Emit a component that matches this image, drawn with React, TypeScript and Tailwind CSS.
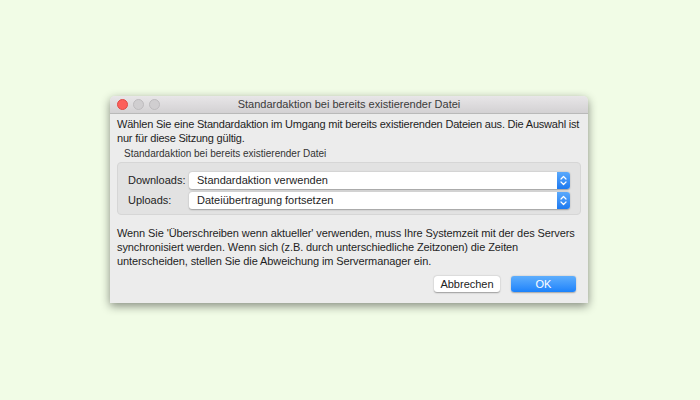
export default function App() {
  return (
    <div className="w-[700px] h-[400px] bg-[#f1fce6] flex items-start justify-start font-['Liberation_Sans',sans-serif]">
      <div className="ml-[110px] mt-[96px] w-[478px] h-[207px] bg-[#ececec] rounded-t-[5px] shadow-[0_3px_10px_rgba(0,0,0,0.45)] flex flex-col overflow-hidden">
        <div className="h-[18px] bg-gradient-to-b from-[#e8e6e8] to-[#d3d1d3] border-b border-[#b9b9b9] flex items-center relative">
          <div className="flex gap-[5px] pl-[7px]">
            <span className="w-[11px] h-[11px] rounded-full bg-[#fc605c] border border-[#de4a46]" />
            <span className="w-[11px] h-[11px] rounded-full bg-[#d0ced0] border border-[#bdbbbd]" />
            <span className="w-[11px] h-[11px] rounded-full bg-[#d0ced0] border border-[#bdbbbd]" />
          </div>
          <span className="absolute inset-0 flex items-center justify-center text-[11px] text-[#3b3b3b]">
            Standardaktion bei bereits existierender Datei
          </span>
        </div>
        <div className="pl-[7px] pr-[4px] pt-[3px] flex flex-col">
          <p className="text-[11px] tracking-[-0.2px] leading-[14px] text-[#1e1e1e]">
            Wählen Sie eine Standardaktion im Umgang mit bereits existierenden Dateien aus. Die Auswahl ist nur für diese Sitzung gültig.
          </p>
          <span className="text-[10px] leading-[12px] text-[#333] mt-[3px] ml-[7px]">
            Standardaktion bei bereits existierender Datei
          </span>
          <div className="mt-[2px] mr-[3px] bg-[#e2e2e2] border border-[#d6d6d6] rounded-[4px] h-[53px] pt-[9px] px-[10px] flex flex-col gap-[3px]">
            <Row label="Downloads:" value="Standardaktion verwenden" />
            <Row label="Uploads:" value="Dateiübertragung fortsetzen" />
          </div>
          <p className="mt-[11px] text-[11px] tracking-[-0.1px] leading-[14px] text-[#1e1e1e] pr-[7px]">
            Wenn Sie 'Überschreiben wenn aktueller' verwenden, muss Ihre Systemzeit mit der des Servers synchronisiert werden. Wenn sich (z.B. durch unterschiedliche Zeitzonen) die Zeiten unterscheiden, stellen Sie die Abweichung im Servermanager ein.
          </p>
          <div className="mt-[8px] flex justify-end gap-[11px] pr-[8px]">
            <button className="w-[66px] h-[16px] bg-white rounded-[3px] shadow-[0_0.5px_1.5px_rgba(0,0,0,0.35)] text-[11px] leading-[16px] text-[#222]">
              Abbrechen
            </button>
            <button className="w-[65px] h-[16px] rounded-[3px] bg-gradient-to-b from-[#5eaefc] to-[#1a82fb] text-[11px] leading-[16px] text-white shadow-[0_0.5px_1.5px_rgba(0,0,0,0.3)]">
              OK
            </button>
          </div>
        </div>
      </div>
    </div>
  );
}

function Row({ label, value }: { label: string; value: string }) {
  return (
    <div className="flex items-center h-[17px]">
      <span className="w-[61px] text-[11px] text-[#1e1e1e]">{label}</span>
      <div className="flex-1 h-[17px] bg-white rounded-[3px] shadow-[0_0.5px_1.5px_rgba(0,0,0,0.3)] flex items-center justify-between">
        <span className="pl-[8px] text-[11px] text-[#1e1e1e]">{value}</span>
        <span className="w-[13px] h-[17px] rounded-r-[3px] bg-gradient-to-b from-[#5aa9fc] to-[#1b79f0] flex items-center justify-center">
          <svg width="7" height="11" viewBox="0 0 7 11" fill="none" stroke="white" strokeWidth="1.2" strokeLinecap="round" strokeLinejoin="round">
            <path d="M1 4 L3.5 1.5 L6 4" />
            <path d="M1 7 L3.5 9.5 L6 7" />
          </svg>
        </span>
      </div>
    </div>
  );
}
